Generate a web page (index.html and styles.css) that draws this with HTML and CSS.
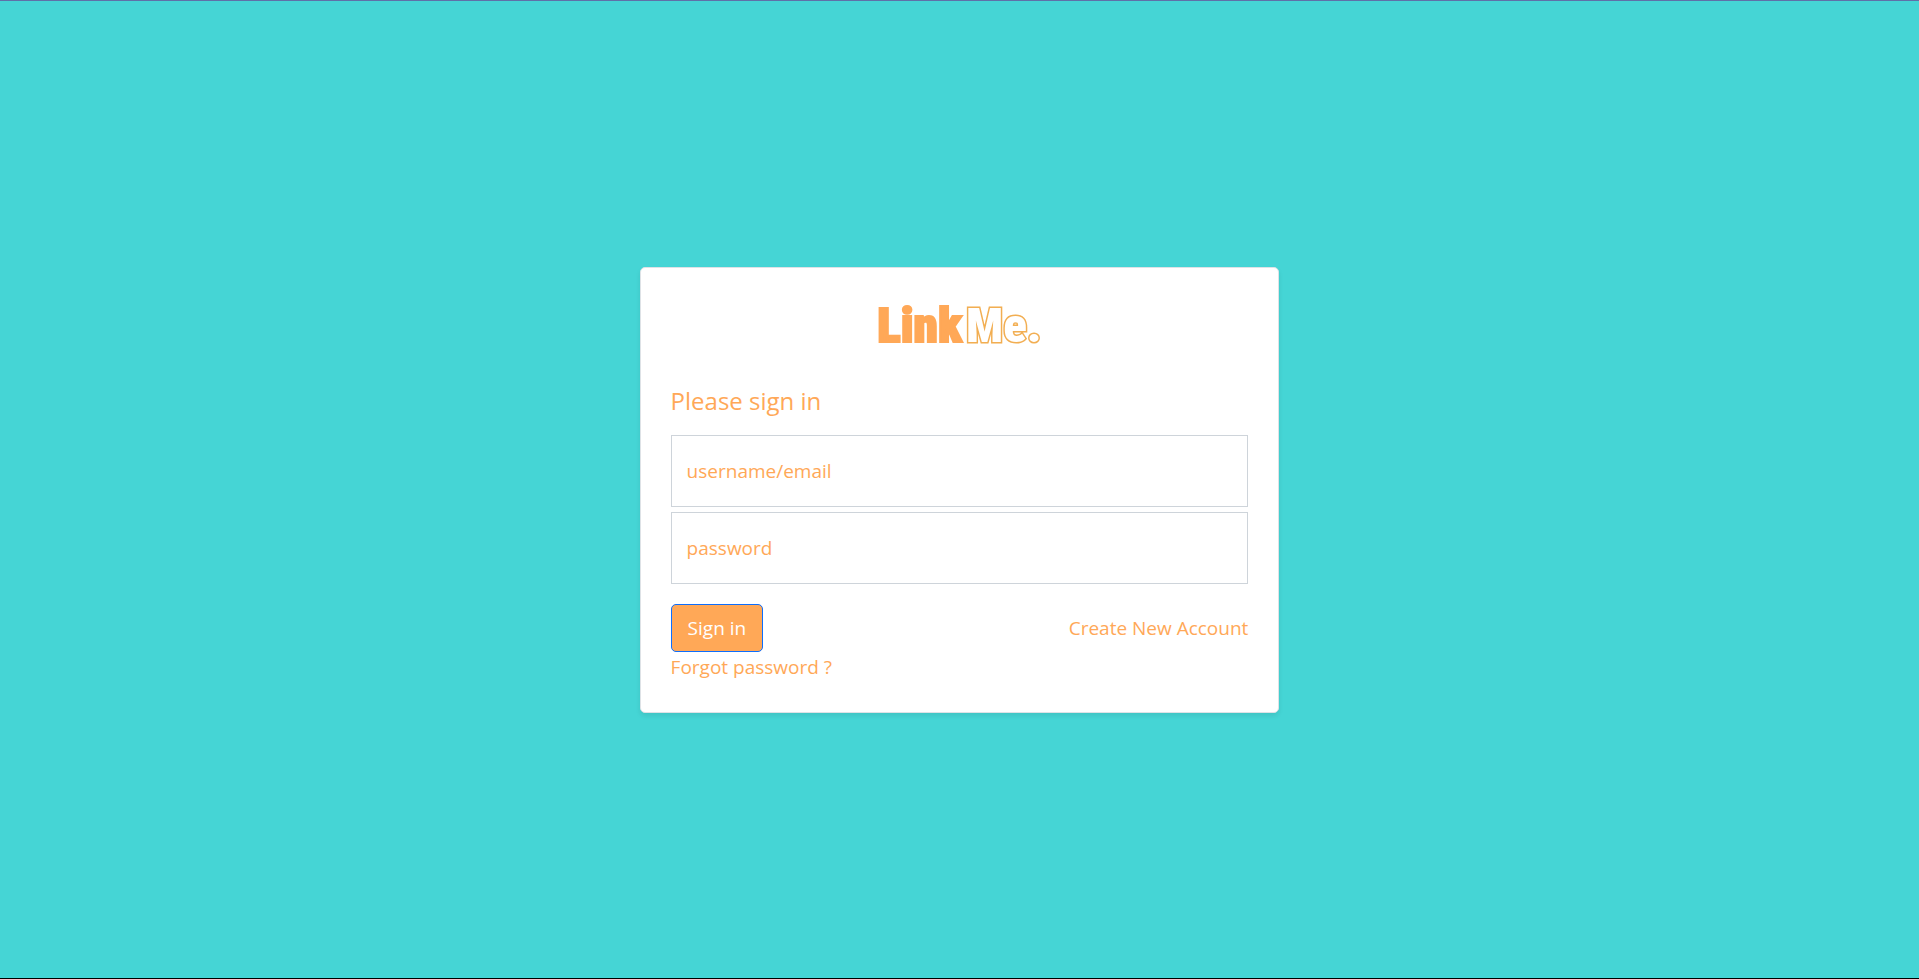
FILE: index.html
```html
<!DOCTYPE html>
<html lang="en">
<head>
<meta charset="utf-8">
<meta name="viewport" content="width=device-width, initial-scale=1">
<title>LinkMe - Sign in</title>
<link rel="stylesheet" href="styles.css">
</head>
<body class="page">
<main class="card">
  <div class="logo"><span class="logo-solid">Link</span><span class="logo-outline">Me.</span></div>
  <form class="form">
    <h1 class="title">Please sign in</h1>
    <div class="fields">
      <input class="field" type="text" name="username" placeholder="username/email" aria-label="username/email">
      <input class="field" type="password" name="password" placeholder="password" aria-label="password">
    </div>
    <div class="actions">
      <button class="submit" type="submit">Sign in</button>
      <a class="link" href="#">Create New Account</a>
    </div>
    <a class="link" href="#">Forgot password ?</a>
  </form>
</main>
</body>
</html>
```

FILE: styles.css
```css
* {
  box-sizing: border-box;
}

.page {
  margin: 0;
  min-height: 100vh;
  display: flex;
  align-items: center;
  justify-content: center;
  background: #45d5d5;
  border-top: 1px solid #5f70a8;
  border-bottom: 1px solid #000;
  font-family: "Open Sans", "Noto Sans", sans-serif;
  font-size: 19px;
  line-height: 30px;
  color: #ffa857;
}

.card {
  width: 33.34%;
  min-width: 360px;
  padding: 30px;
  background: #fff;
  border: 1px solid #dee2e6;
  border-radius: 5px;
  box-shadow: 0 3px 5px rgba(0, 0, 0, 0.08);
}

.logo {
  display: flex;
  justify-content: center;
  gap: 4px;
  padding-bottom: 32px;
  font-family: "Roboto Condensed", "Open Sans Condensed", Lato, sans-serif;
  font-size: 49px;
  font-weight: 900;
  line-height: 56px;
}

.logo-solid {
  -webkit-text-stroke: 2px #ffa857;
}

.logo-outline {
  color: #fff;
  -webkit-text-stroke: 3px #f2ae52;
  paint-order: stroke fill;
}

.title {
  margin: 0 0 19px;
  font-size: 24px;
  font-weight: 400;
  line-height: 30px;
}

.fields {
  display: grid;
  gap: 5px;
  margin-bottom: 20px;
}

.field {
  width: 100%;
  height: 72px;
  padding: 0 15px;
  border: 1px solid #ced4da;
  border-radius: 0;
  background: #fff;
  font: inherit;
  color: #ffa857;
}

.field::placeholder {
  color: #ffa857;
  opacity: 1;
}

.actions {
  display: flex;
  align-items: center;
  justify-content: space-between;
}

.submit {
  padding: 8px 16px;
  border: 1px solid #0d6efd;
  border-radius: 5px;
  background: #ffa857;
  font: inherit;
  color: #fff;
}

.link {
  color: #ffa857;
  text-decoration: none;
}
```
